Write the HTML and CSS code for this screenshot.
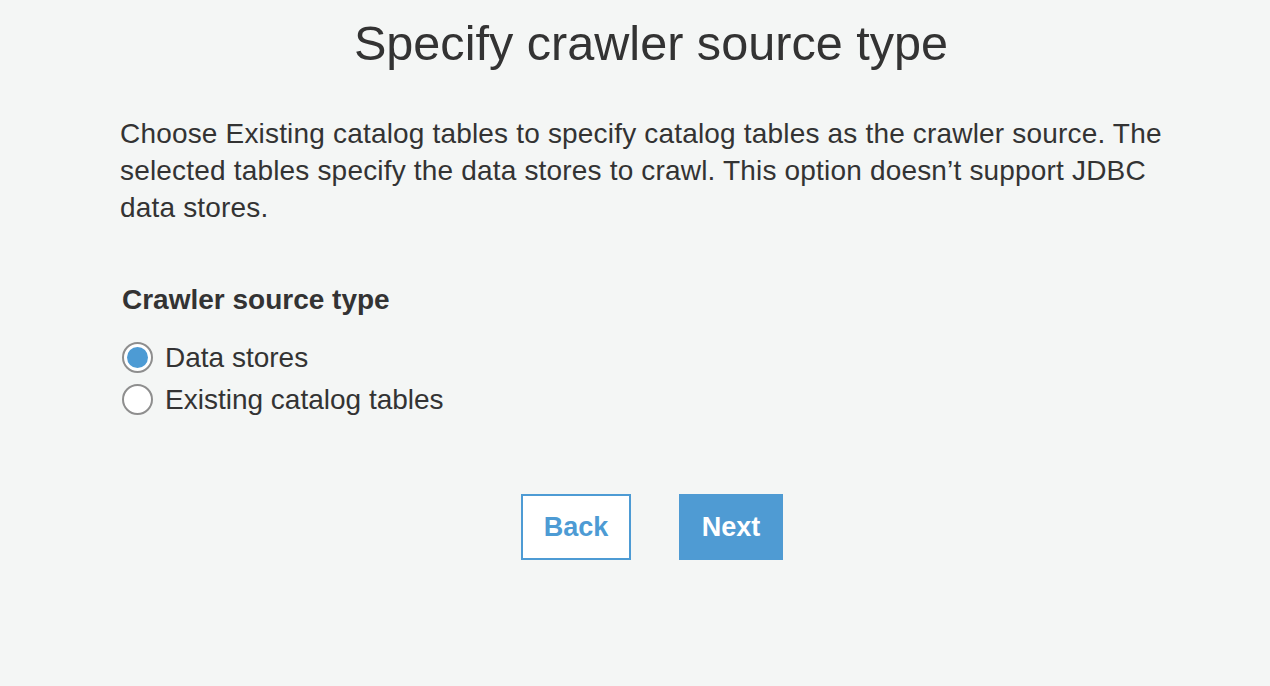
FILE: index.html
```html
<!DOCTYPE html>
<html lang="en">
<head>
<meta charset="utf-8">
<title>Specify crawler source type</title>
<link rel="stylesheet" href="styles.css">
</head>
<body>
<main class="panel">
  <h1 class="title">Specify crawler source type</h1>
  <p class="desc">Choose Existing catalog tables to specify catalog tables as the crawler source. The selected tables specify the data stores to crawl. This option doesn’t support JDBC data stores.</p>
  <section class="field">
    <h2 class="field-label">Crawler source type</h2>
    <div class="options">
      <label class="option"><span class="radio radio-on"></span><span class="option-text">Data stores</span></label>
      <label class="option"><span class="radio"></span><span class="option-text">Existing catalog tables</span></label>
    </div>
  </section>
  <div class="actions">
    <button class="btn btn-back" type="button">Back</button>
    <button class="btn btn-next" type="button">Next</button>
  </div>
</main>
</body>
</html>
```
FILE: styles.css
```css
html, body {
  margin: 0;
  padding: 0;
  background: #f4f6f5;
}
body {
  font-family: "Liberation Sans", Arial, Helvetica, sans-serif;
  color: #333333;
  height: 686px;
  overflow: hidden;
}
.panel {
  width: 1062px;
  margin: 0 0 0 120px;
  padding-top: 15px;
}
.title {
  margin: 0;
  text-align: center;
  font-size: 48.6px;
  font-weight: 400;
  line-height: 56px;
  color: #333333;
}
.desc {
  margin: 44px 0 0 0;
  font-size: 28px;
  line-height: 37px;
  letter-spacing: 0.18px;
}
.field {
  margin-top: 57px;
  padding-left: 2px;
}
.field-label {
  margin: 0;
  font-size: 28px;
  font-weight: 700;
  line-height: 34px;
}
.options {
  margin-top: 25px;
  display: flex;
  flex-direction: column;
  gap: 11px;
}
.option {
  display: flex;
  align-items: center;
  gap: 12px;
  height: 31px;
}
.radio {
  box-sizing: border-box;
  width: 31px;
  height: 31px;
  border-radius: 50%;
  border: 2px solid #8e8e8e;
  background: #ffffff;
  position: relative;
  flex: none;
}
.radio-on::after {
  content: "";
  position: absolute;
  left: 3px;
  top: 3px;
  width: 21px;
  height: 21px;
  border-radius: 50%;
  background: #4d9bd4;
}
.option-text {
  font-size: 28px;
  line-height: 31px;
}
.actions {
  margin-top: 79px;
  padding-left: 2px;
  display: flex;
  justify-content: center;
  gap: 48px;
}
.btn {
  box-sizing: border-box;
  height: 66px;
  padding: 0;
  font-family: "Liberation Sans", Arial, Helvetica, sans-serif;
  font-size: 27px;
  font-weight: 700;
  cursor: pointer;
}
.btn-back {
  width: 110px;
  background: #ffffff;
  border: 2px solid #4d9bd4;
  color: #4d9bd4;
}
.btn-next {
  width: 104px;
  background: #4f9bd3;
  border: 2px solid #4f9bd3;
  color: #ffffff;
}
```
